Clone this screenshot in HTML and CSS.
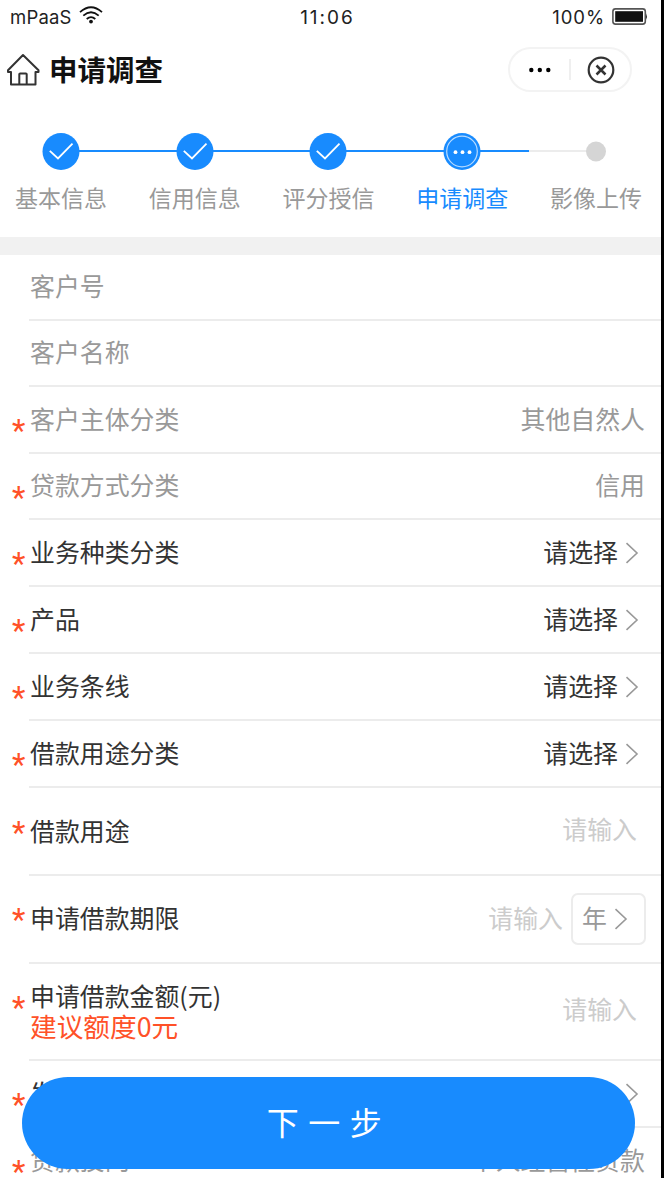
FILE: index.html
```
<!DOCTYPE html>
<html lang="zh-CN">
<head>
<meta charset="utf-8">
<title>申请调查</title>
<link rel="stylesheet" href="styles.css">
</head>
<body>
<svg class="defs" aria-hidden="true">
  <symbol id="chevron" viewBox="0 0 14 22"><path d="M1.5 1.2 12 11 1.5 20.8" fill="none" stroke="currentColor" stroke-width="1.6"/></symbol>
  <symbol id="done" viewBox="0 0 38 38"><circle cx="19" cy="19.500" r="18.500" fill="#188bfe"/><path d="M7.800 18.800 16 26.500 30.500 11.700" fill="none" stroke="#fff" stroke-width="1.800"/></symbol>
</svg>
<main class="screen">
  <div class="status">
    <div class="status-left">mPaaS
      <svg class="wifi" viewBox="0 0 24 18"><g fill="none" stroke="#111" stroke-width="1.8"><path d="M1 6.2Q12-3.6 23 6.2"/><path d="M4.3 9.6Q12 2.8 19.7 9.6"/><path d="M7.7 13Q12 9.2 16.3 13"/></g><circle cx="12" cy="15.6" r="1.9" fill="#111"/></svg>
    </div>
    <div class="status-time">11:06</div>
    <div class="status-right">100%
      <svg class="battery" viewBox="0 0 36 17"><rect x=".9" y=".9" width="32.4" height="15.2" rx="2.6" fill="#fff" stroke="#555" stroke-width="1.6"/><rect x="3.2" y="3.2" width="27.8" height="10.6" fill="#111"/><path d="M34 5.2q1.8 3.300 0 6.600z" fill="#222"/></svg>
    </div>
  </div>
  <header class="nav">
    <svg class="home" viewBox="0 0 34 34"><path d="M17 2 2 17.200V19H5V31.500H29.500V19H32.500V17.200ZM13.300 31V21.300Q13.300 20.500 14.100 20.500H19.900Q20.700 20.500 20.700 21.300V31" fill="none" stroke="#333" stroke-width="2" stroke-linejoin="round"/></svg>
    <h1 class="title">申请调查</h1>
    <div class="capsule">
      <svg class="more" viewBox="0 0 24 6"><circle cx="3.300" cy="3" r="2.200"/><circle cx="11.800" cy="3" r="2.200"/><circle cx="20.300" cy="3" r="2.200"/></svg>
      <span class="capsule-line"></span>
      <svg class="close" viewBox="0 0 28 28"><g fill="none" stroke="#333"><circle cx="14" cy="14" r="12.300" stroke-width="2.200"/><path d="m9.500 9.500 9 9m0-9-9 9" stroke-width="2.500"/></g></svg>
    </div>
  </header>
  <ol class="steps">
    <li class="step"><svg class="dot"><use href="#done"/></svg><span>基本信息</span></li>
    <li class="step"><svg class="dot"><use href="#done"/></svg><span>信用信息</span></li>
    <li class="step"><svg class="dot"><use href="#done"/></svg><span>评分授信</span></li>
    <li class="step step-active"><svg class="dot" viewBox="0 0 38 38"><circle cx="19" cy="19.500" r="18.500" fill="#188bfe"/><circle cx="19" cy="19.500" r="15.300" fill="none" stroke="#b8dbff" stroke-width="1.200"/><g fill="#fff"><circle cx="12.500" cy="20.200" r="1.900"/><circle cx="19.500" cy="20.200" r="1.900"/><circle cx="26.500" cy="20.200" r="1.900"/></g></svg><span>申请调查</span></li>
    <li class="step step-last"><svg class="dot" viewBox="0 0 38 38"><circle cx="19" cy="19.500" r="10" fill="#d5d5d5"/></svg><span>影像上传</span></li>
  </ol>
  <section class="form">
    <div class="row h66 muted"><span class="label">客户号</span></div>
    <div class="row h66 muted"><span class="label">客户名称</span></div>
    <div class="row muted"><i class="star">*</i><span class="label">客户主体分类</span><span class="value">其他自然人</span></div>
    <div class="row h66 muted"><i class="star">*</i><span class="label">贷款方式分类</span><span class="value">信用</span></div>
    <div class="row"><i class="star">*</i><span class="label">业务种类分类</span><span class="value">请选择</span><svg class="chev"><use href="#chevron"/></svg></div>
    <div class="row"><i class="star">*</i><span class="label">产品</span><span class="value">请选择</span><svg class="chev"><use href="#chevron"/></svg></div>
    <div class="row"><i class="star">*</i><span class="label">业务条线</span><span class="value">请选择</span><svg class="chev"><use href="#chevron"/></svg></div>
    <div class="row"><i class="star">*</i><span class="label">借款用途分类</span><span class="value">请选择</span><svg class="chev"><use href="#chevron"/></svg></div>
    <div class="row tall purpose"><i class="star">*</i><span class="label">借款用途</span><span class="value hint">请输入</span></div>
    <div class="row tall term"><i class="star">*</i><span class="label">申请借款期限</span><span class="value hint">请输入</span><span class="unit"><span class="value">年</span><svg class="chev"><use href="#chevron"/></svg></span></div>
    <div class="row amount"><i class="star">*</i><span class="label">申请借款金额(元)<em class="advice">建议额度0元</em></span><span class="value hint">请输入</span></div>
    <div class="row"><i class="star">*</i><span class="label">发放方式</span><svg class="chev"><use href="#chevron"/></svg></div>
    <div class="row muted"><i class="star">*</i><span class="label">贷款投向</span><span class="value">个人经营性贷款</span></div>
  </section>
  <button class="next">下一步</button>
</main>
</body>
</html>
```
FILE: styles.css
```
* { box-sizing: border-box; }
body {
  margin: 0;
  height: 1178px;
  overflow: hidden;
  background: #000;
  font-family: "Noto Sans CJK SC", sans-serif;
}
.defs { position: absolute; width: 0; height: 0; }
.screen {
  position: relative;
  width: 661px;
  height: 1178px;
  overflow: hidden;
  background: #fff;
}
.status {
  display: grid;
  grid-template-columns: 1fr auto 1fr;
  height: 34px;
  padding: 0 13px 0 10px;
  align-items: center;
  font: 18.500px/34px Inter, sans-serif;
  color: #222;
}
.status-left, .status-right { display: flex; align-items: center; gap: 8px; }
.status-left { letter-spacing: .2px; }
.status-right { justify-content: flex-end; letter-spacing: .9px; }
.status-time { font-size: 19px; line-height: 32px; letter-spacing: 2px; padding-top: 2px; margin-right: 3px; }
.wifi { width: 24px; height: 18px; margin: -4px 0 0 -1px; }
.battery { width: 36px; height: 17px; margin: -2px 0 0 -1px; }
.nav {
  display: flex;
  align-items: center;
  height: 72px;
  padding: 0 29px 2px 6px;
}
.home { width: 34px; height: 34px; margin-top: 1px; }
.title {
  margin: 0 auto 0 9px;
  font-size: 28.500px;
  line-height: 40px;
  font-weight: 700;
  color: #111;
}
.capsule {
  display: flex;
  align-items: center;
  width: 124px;
  height: 45px;
  padding: 1px 15px 0 18px;
  border: 2px solid #f3f3f3;
  border-radius: 23px;
}
.more { width: 24px; height: 6px; }
.capsule-line { width: 2px; height: 21px; margin: 0 16px 0 17px; background: #efefef; }
.close { width: 28px; height: 28px; flex: none; }
.steps {
  display: flex;
  margin: 0 0 0 -6px;
  padding: 26px 0 0;
  width: 669px;
  height: 131px;
  list-style: none;
}
.step {
  flex: 1;
  display: flex;
  flex-direction: column;
  align-items: center;
  font-size: 23px;
  line-height: 34px;
  color: #999;
  gap: 10px;
  background: linear-gradient(#188bfe, #188bfe) 0 18px / 100% 2px no-repeat;
}
.step:first-child { background-position: 67px 18px; }
.step-last { background: linear-gradient(#ececec, #ececec) 0 18px / 50% 2px no-repeat; }
.step-active { color: #188bfe; }
.dot { width: 38px; height: 38px; overflow: visible; }
.form { border-top: 18px solid #f1f1f1; }
.row {
  display: flex;
  align-items: center;
  height: 67px;
  padding: 0 16px 2px 12px;
  background: linear-gradient(#ececec, #ececec) 29px 100% / 100% 2px no-repeat;
  font-size: 24.900px;
  line-height: 30px;
  color: #333;
}
.h66 { height: 66px; }
.muted { color: #999; }
.star {
  width: 18px;
  padding-top: 23px;
  font: normal 31px/30px Roboto, sans-serif;
  color: #ff5128;
}
.label { margin-right: auto; padding-bottom: 4px; }
.value { padding-bottom: 4px; }
.row > .label:first-child { margin-left: 18px; }
.chev { width: 14px; height: 22px; margin: 0 6px 0 7px; color: #999; flex: none; }
.tall { height: 88px; }
.hint { color: #ccc; margin-right: 8px; }
.purpose .star { padding-top: 3px; }
.term .star { padding-top: 1px; }
.amount .star { padding: 0 0 7px; }
.purpose .label { padding-bottom: 2px; }
.purpose .hint { margin-top: -2px; }
.unit {
  display: flex;
  align-items: center;
  width: 75px;
  height: 52px;
  margin-right: -1px;
  padding-left: 9px;
  border: 2px solid #ececec;
  border-radius: 7px;
  color: #999;
}
.amount { height: 97px; }
.amount .label { padding-bottom: 3px; }
.amount .hint { padding-bottom: 7px; }
.advice {
  display: block;
  font-style: normal;
  font-size: 26.700px;
  line-height: 31px;
  color: #ff5128;
}
.next {
  position: absolute;
  left: 22px;
  top: 1077px;
  width: 613px;
  height: 92px;
  border: 0;
  border-radius: 46px;
  padding: 0 0 4px 1px;
  background: #188bfe;
  color: #fff;
  font: 400 32px/46px "Noto Sans CJK SC", sans-serif;
  letter-spacing: 9.500px;
}
```
